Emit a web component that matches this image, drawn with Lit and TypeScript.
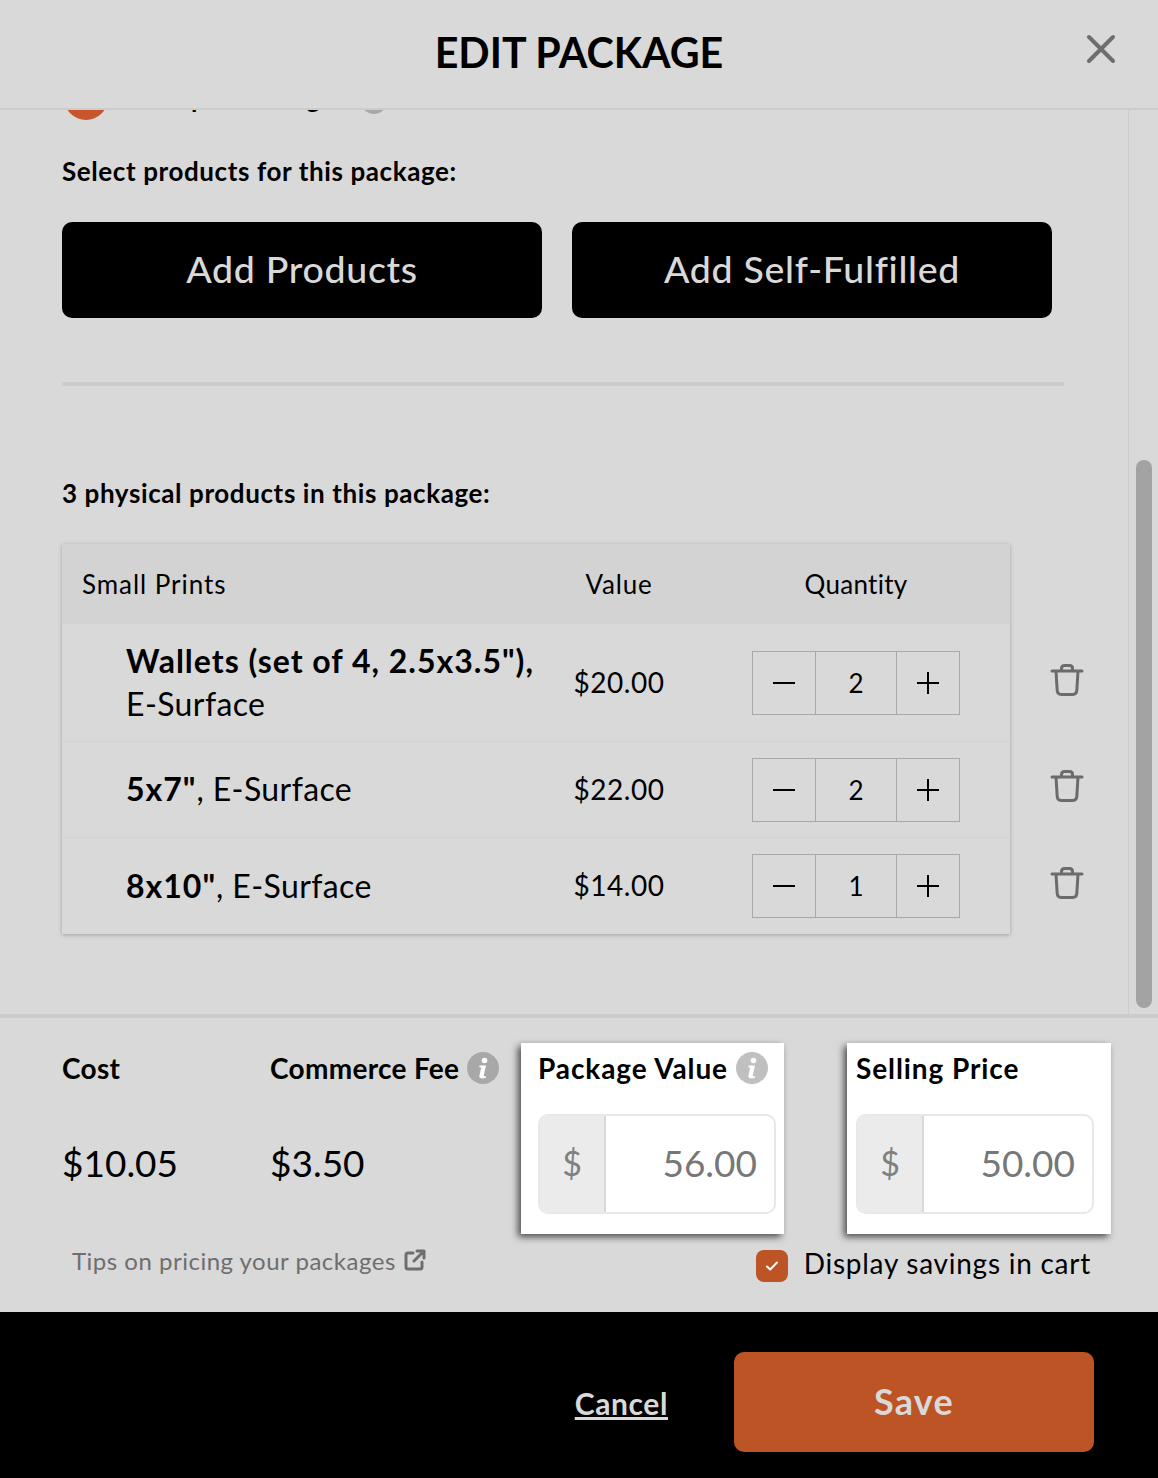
import { LitElement, css, html, svg } from "lit";
import { customElement } from "lit/decorators.js";

const rows = [
  { bold: 'Wallets (set of 4, 2.5x3.5"),', rest: "E-Surface", value: "$20.00", qty: 2, height: 117 },
  { bold: '5x7"', rest: ", E-Surface", value: "$22.00", qty: 2, height: 96 },
  { bold: '8x10"', rest: ", E-Surface", value: "$14.00", qty: 1, height: 97 },
];

const trash = svg`<svg class="trash" viewBox="0 0 34 34" width="34" height="34" fill="none" stroke="#6b6b6b" stroke-width="3" stroke-linecap="round" stroke-linejoin="round">
  <path d="M2 8h30M6 8l1.2 19.5c.2 2.6 1.6 4 4 4h11.6c2.4 0 3.8-1.4 4-4L28 8M11.5 8V5.5C11.5 3.5 12.8 2.5 14.5 2.5h5c1.700 0 3 1 3 3V8"/>
</svg>`;

const info = (fill: string) => svg`<svg class="info" viewBox="0 0 32 32" width="32" height="32">
  <circle cx="16" cy="16" r="16" fill="${fill}"/>
  <circle cx="17.500" cy="8.500" r="2.800" fill="#fff"/>
  <path d="M12.500 13.500h6.500l-2.300 10.200c-.1.700.5.800 2.300.3l-.3 1.800c-2.500 1-7 1.300-6.300-2l1.800-8.300-1.900-.2z" fill="#fff"/>
</svg>`;

@customElement("app-root")
export class AppRoot extends LitElement {
  static styles = css`
    :host {
      display: block;
      width: 1158px;
      height: 1478px;
      overflow: hidden;
      background: #d9d9d9;
      color: #000;
      font-family: "Lato", "Noto Sans", sans-serif;
    }

    .shell {
      display: flex;
      flex-direction: column;
      height: 1478px;
    }

    header {
      flex: none;
      height: 108px;
      border-bottom: 2px solid #cccccc;
      display: flex;
      align-items: center;
      justify-content: center;
      position: relative;
    }

    h1 {
      margin: 0 0 2px;
      font-size: 41.2px;
      font-weight: 700;
      line-height: 1;
    }

    .close {
      position: absolute;
      left: 1086px;
      top: 34px;
    }

    .scroller {
      flex: none;
      height: 904px;
      display: flex;
      overflow: hidden;
    }

    .content {
      flex: none;
      width: 1128px;
      box-sizing: border-box;
      padding-left: 62px;
      overflow: hidden;
    }

    .pkg {
      display: flex;
      align-items: center;
      height: 44px;
      margin-top: -34px;
      font-size: 26px;
      font-weight: 700;
      letter-spacing: 0.6px;
    }

    .avatar {
      width: 44px;
      height: 44px;
      margin-left: 2px;
      border-radius: 50%;
      background: #c9562a;
    }

    .pkg span {
      margin: 0 0 0 17px;
    }

    .dot {
      width: 26px;
      height: 26px;
      margin-left: 26px;
      margin-top: 6px;
      border-radius: 50%;
      background: #a8a8a8;
    }

    .label {
      margin: 0;
      font-size: 26px;
      font-weight: 700;
      line-height: 32px;
      letter-spacing: 0.6px;
    }

    .select {
      margin-top: 35px;
    }

    .actions {
      display: flex;
      gap: 30px;
      margin-top: 35px;
    }

    .actions button {
      width: 480px;
      height: 96px;
      padding: 0 0 4px;
      border: 0;
      border-radius: 10px;
      background: #000;
      color: #d9d9d9;
      font: 500 37.5px "Lato", sans-serif;
      letter-spacing: 0.7px;
    }

    hr {
      width: 1002px;
      height: 4px;
      margin: 64px 0 0;
      border: 0;
      background: #cccccc;
    }

    .count {
      margin-top: 91px;
    }

    .products {
      display: flex;
      margin-top: 35px;
    }

    .table {
      flex: none;
      width: 948px;
      box-shadow: 0 1px 4px rgba(0, 0, 0, 0.25);
    }

    .head,
    .row {
      display: grid;
      grid-template-columns: 478px 158px 312px;
      align-items: center;
    }

    .head {
      height: 80px;
      background: #d3d3d3;
      font-size: 26px;
      letter-spacing: 0.8px;
    }

    .head div:first-child {
      padding-left: 20px;
      letter-spacing: 0.95px;
    }

    .center {
      text-align: center;
    }

    .row .center {
      letter-spacing: 0.5px;
      padding-bottom: 2px;
    }

    .head .qty-title {
      margin-left: 54px;
      width: 208px;
      text-align: center;
      letter-spacing: 0.3px;
    }

    .row {
      box-sizing: border-box;
      border-top: 1px solid #d2d2d2;
      font-size: 28px;
    }

    .row:nth-child(2) {
      border-top: 0;
    }

    .name {
      padding-left: 64px;
      padding-bottom: 2px;
      font-size: 32px;
      line-height: 43px;
      letter-spacing: 0.4px;
      white-space: nowrap;
    }

    .name b {
      font-weight: 700;
      letter-spacing: 1px;
    }

    .stepper {
      display: grid;
      grid-template-columns: 62px 82px 62px;
      width: 208px;
      height: 64px;
      margin-left: 54px;
      box-sizing: border-box;
      border: 1px solid #a9a9a9;
      font-size: 26px;
    }

    .stepper div {
      display: flex;
      align-items: center;
      justify-content: center;
    }

    .stepper div:nth-child(2) {
      border-left: 1px solid #a9a9a9;
      border-right: 1px solid #a9a9a9;
    }

    .trash-col {
      display: flex;
      flex-direction: column;
      padding-top: 80px;
    }

    .trash-cell {
      display: flex;
      align-items: center;
      margin-left: 40px;
      padding-bottom: 6px;
      box-sizing: border-box;
    }

    .track {
      flex: none;
      width: 30px;
      box-sizing: border-box;
      border-left: 1px solid #cccccc;
      padding: 350px 6px 6px 7px;
    }

    .thumb {
      width: 16px;
      height: 548px;
      border-radius: 8px;
      background: #a3a3a3;
    }

    .pricing {
      flex: none;
      height: 298px;
      border-top: 4px solid #cccccc;
      box-sizing: border-box;
      padding: 25px 47px 0 62px;
    }

    .cols {
      display: grid;
      grid-template-columns: 208px 251px 326px 264px;
    }

    .stat {
      padding-top: 9px;
    }

    .stat-title {
      display: flex;
      align-items: center;
      gap: 8px;
      font-size: 28px;
      font-weight: 700;
      height: 32px;
      white-space: nowrap;
      letter-spacing: 0.3px;
    }

    .stat-value {
      margin-top: 54px;
      font-size: 37px;
      line-height: 50px;
    }

    .card {
      box-sizing: border-box;
      width: 263px;
      height: 191px;
      padding: 9px 8px 0 17px;
      background: #fff;
      box-shadow: -3px 3px 7px rgba(0, 0, 0, 0.65);
    }

    .card:last-child {
      width: 264px;
      padding-left: 9px;
    }

    .card .stat-title {
      letter-spacing: 0.9px;
    }

    .money {
      display: flex;
      height: 100px;
      margin-top: 30px;
      box-sizing: border-box;
      border: 2px solid #e8e8e8;
      border-radius: 10px;
      overflow: hidden;
      width: 238px;
    }

    .addon {
      flex: none;
      width: 66px;
      box-sizing: border-box;
      padding-bottom: 4px;
      display: flex;
      align-items: center;
      justify-content: center;
      background: #ebebeb;
      border-right: 2px solid #d9d9d9;
      color: #808080;
      font-size: 34px;
    }

    .amount {
      flex: 1;
      display: flex;
      align-items: center;
      justify-content: flex-end;
      padding: 0 17px 4px 0;
      color: #777777;
      font-size: 37px;
    }

    .under {
      display: flex;
      justify-content: space-between;
      align-items: center;
      height: 32px;
      margin-top: 16px;
    }

    .tips {
      display: flex;
      align-items: center;
      gap: 8px;
      margin-left: 10px;
      padding-bottom: 12px;
      color: #6e6e6e;
      font-size: 24px;
      letter-spacing: 0.5px;
    }

    .saving {
      display: flex;
      align-items: center;
      gap: 16px;
      margin-right: 20px;
      font-size: 28px;
      letter-spacing: 0.75px;
    }

    .saving span {
      padding-bottom: 6px;
    }

    .check {
      width: 32px;
      height: 32px;
      border-radius: 8px;
      background: #bd5426;
      display: flex;
      align-items: center;
      justify-content: center;
    }

    footer {
      flex: none;
      height: 166px;
      background: #000;
      display: flex;
      align-items: center;
      justify-content: flex-end;
      padding-right: 64px;
      box-sizing: border-box;
    }

    .cancel {
      margin: 16px 66px 0 0;
      color: #d9d9d9;
      font-size: 30px;
      font-weight: 700;
      letter-spacing: 0.6px;
      text-decoration: underline;
    }

    .save {
      width: 360px;
      height: 100px;
      margin-top: 14px;
      padding: 0 0 3px;
      border: 0;
      border-radius: 10px;
      background: #bd5426;
      color: #d9d9d9;
      font: 700 36px "Lato", sans-serif;
      letter-spacing: 1.2px;
    }
  `;

  private card(title: string, amount: string, hasInfo: boolean) {
    return html`<div class="card">
      <div class="stat-title">${title}${hasInfo ? info("#c0c0c0") : ""}</div>
      <div class="money">
        <div class="addon">$</div>
        <div class="amount">${amount}</div>
      </div>
    </div>`;
  }

  render() {
    return html`<div class="shell">
      <header>
        <h1>EDIT PACKAGE</h1>
        <svg class="close" viewBox="0 0 30 30" width="30" height="30" stroke="#6e6e6e" stroke-width="4" stroke-linecap="round">
          <path d="M3 3l24 24M27 3L3 27" />
        </svg>
      </header>

      <div class="scroller">
        <div class="content">
          <div class="pkg">
            <div class="avatar"></div>
            <span>Example Package</span>
            <div class="dot"></div>
          </div>
          <p class="label select">Select products for this package:</p>
          <div class="actions">
            <button>Add Products</button>
            <button>Add Self-Fulfilled</button>
          </div>
          <hr />
          <p class="label count">3 physical products in this package:</p>
          <div class="products">
            <div class="table">
              <div class="head">
                <div>Small Prints</div>
                <div class="center">Value</div>
                <div class="qty-title">Quantity</div>
              </div>
              ${rows.map(
                (r) => html`<div class="row" style="height:${r.height}px">
                  <div class="name"><b>${r.bold}</b>${r.rest.startsWith(",") ? r.rest : html`<br />${r.rest}`}</div>
                  <div class="center">${r.value}</div>
                  <div class="stepper">
                    <div>
                      <svg viewBox="0 0 24 24" width="24" height="24" stroke="#000" stroke-width="2"><path d="M1 12h22" /></svg>
                    </div>
                    <div>${r.qty}</div>
                    <div>
                      <svg viewBox="0 0 24 24" width="24" height="24" stroke="#000" stroke-width="2"><path d="M1 12h22M12 1v22" /></svg>
                    </div>
                  </div>
                </div>`
              )}
            </div>
            <div class="trash-col">
              ${rows.map((r) => html`<div class="trash-cell" style="height:${r.height}px">${trash}</div>`)}
            </div>
          </div>
        </div>
        <div class="track"><div class="thumb"></div></div>
      </div>

      <div class="pricing">
        <div class="cols">
          <div class="stat">
            <div class="stat-title">Cost</div>
            <div class="stat-value">$10.05</div>
          </div>
          <div class="stat">
            <div class="stat-title">Commerce Fee ${info("#a8a8a8")}</div>
            <div class="stat-value">$3.50</div>
          </div>
          ${this.card("Package Value", "56.00", true)} ${this.card("Selling Price", "50.00", false)}
        </div>
        <div class="under">
          <div class="tips">
            Tips on pricing your packages
            <svg viewBox="0 0 22 22" width="22" height="22" fill="none" stroke="#6e6e6e" stroke-width="3" stroke-linecap="round" stroke-linejoin="round">
              <path d="M9 4H4a2 2 0 0 0-2 2v12a2 2 0 0 0 2 2h12a2 2 0 0 0 2-2v-5M13 2h7v7M20 2L10 12" />
            </svg>
          </div>
          <div class="saving">
            <div class="check">
              <svg viewBox="0 0 16 16" width="16" height="16" fill="none" stroke="#fff" stroke-width="2" stroke-linecap="round" stroke-linejoin="round">
                <path d="M3 8.500l3.200 3L13 4.500" />
              </svg>
            </div>
            <span>Display savings in cart</span>
          </div>
        </div>
      </div>

      <footer>
        <a class="cancel">Cancel</a>
        <button class="save">Save</button>
      </footer>
    </div>`;
  }
}
